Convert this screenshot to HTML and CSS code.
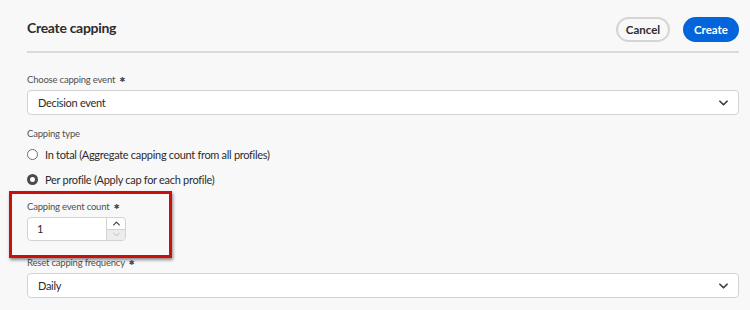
FILE: index.html
```html
<!DOCTYPE html>
<html lang="en">
<head>
    <meta charset="UTF-8">
    <meta name="viewport" content="width=device-width, initial-scale=1.0">
    <title>Create capping</title>
    <link rel="stylesheet" href="styles.css">
</head>
<body>
    <div class="dialog">
        <div class="dialog-header">
            <h1 class="dialog-title">Create capping</h1>
            <div class="header-actions">
                <button class="btn btn-secondary">Cancel</button>
                <button class="btn btn-primary">Create</button>
            </div>
        </div>

        <div class="field field-event">
            <label class="field-label">Choose capping event <span class="required">✱</span></label>
            <div class="select">
                <span class="select-value">Decision event</span>
                <svg class="chevron" viewBox="0 0 10 6" fill="none" stroke="currentColor" stroke-width="1.8" stroke-linecap="round" stroke-linejoin="round">
                    <polyline points="1 1 5 5 9 1"></polyline>
                </svg>
            </div>
        </div>

        <div class="field field-type">
            <label class="field-label">Capping type</label>
            <div class="radio-group">
                <div class="radio-row">
                    <span class="radio"></span>
                    <span class="radio-text">In total (Aggregate capping count from all profiles)</span>
                </div>
                <div class="radio-row">
                    <span class="radio checked"></span>
                    <span class="radio-text">Per profile (Apply cap for each profile)</span>
                </div>
            </div>
        </div>

        <div class="field field-count highlighted">
            <label class="field-label">Capping event count <span class="required">✱</span></label>
            <div class="number-input">
                <span class="number-value">1</span>
                <div class="stepper">
                    <div class="step step-up">
                        <svg viewBox="0 0 10 6" fill="none" stroke="currentColor" stroke-width="1.6" stroke-linecap="round" stroke-linejoin="round">
                            <polyline points="1 5 5 1 9 5"></polyline>
                        </svg>
                    </div>
                    <div class="step step-down">
                        <svg viewBox="0 0 10 6" fill="none" stroke="currentColor" stroke-width="1.2" stroke-linecap="round" stroke-linejoin="round">
                            <polyline points="1 1 5 5 9 1"></polyline>
                        </svg>
                    </div>
                </div>
            </div>
        </div>

        <div class="field field-reset">
            <label class="field-label">Reset capping frequency <span class="required">✱</span></label>
            <div class="select">
                <span class="select-value">Daily</span>
                <svg class="chevron" viewBox="0 0 10 6" fill="none" stroke="currentColor" stroke-width="1.8" stroke-linecap="round" stroke-linejoin="round">
                    <polyline points="1 1 5 5 9 1"></polyline>
                </svg>
            </div>
        </div>
    </div>
</body>
</html>
```

FILE: styles.css
```css
* {
    margin: 0;
    padding: 0;
    box-sizing: border-box;
}

body {
    font-family: Lato, "Noto Sans", sans-serif;
    background-color: #f8f8f8;
    color: #2c2c2c;
}

.dialog {
    padding: 17px 11px 0 27px;
}

.dialog-header {
    display: flex;
    align-items: center;
    justify-content: space-between;
    padding-bottom: 9px;
    border-bottom: 2px solid #dadada;
}

.dialog-title {
    font-size: 14px;
    font-weight: 700;
    line-height: 20px;
    letter-spacing: -0.3px;
    color: #2c2c2c;
    margin-bottom: 4px;
}

.header-actions {
    display: flex;
    gap: 13px;
}

.btn {
    font-family: inherit;
    font-size: 11.5px;
    font-weight: 700;
    height: 25px;
    border-radius: 13px;
    cursor: pointer;
}

.btn-secondary {
    width: 54px;
    background-color: #f8f8f8;
    border: 2px solid #d5d5d5;
    color: #2c2c2c;
}

.btn-primary {
    width: 56px;
    background-color: #0265dc;
    border: none;
    color: white;
}

.field-label {
    display: block;
    font-size: 9.5px;
    line-height: 14px;
    letter-spacing: -0.2px;
    color: #505050;
    white-space: nowrap;
}

.required {
    margin-left: 2px;
    font-family: "DejaVu Sans", sans-serif;
    font-size: 7px;
    color: #4b4b4b;
    vertical-align: 1px;
}

.field-event {
    margin-top: 20px;
}

.field-event .field-label,
.field-reset .field-label {
    margin-bottom: 3px;
}

.select {
    height: 25px;
    background-color: white;
    border: 1px solid #d3d3d3;
    border-radius: 4px;
    display: flex;
    align-items: center;
    justify-content: space-between;
    padding: 0 10px 0 10px;
}

.select-value {
    font-size: 11px;
    letter-spacing: -0.3px;
    color: #2c2c2c;
}

.chevron {
    width: 9px;
    height: 6px;
    color: #3a3a3a;
}

.field-type {
    margin-top: 12px;
}

.radio-group {
    display: flex;
    flex-direction: column;
    gap: 5px;
    margin-top: 3px;
}

.radio-row {
    display: flex;
    align-items: center;
    height: 20px;
}

.radio {
    width: 11px;
    height: 11px;
    border-radius: 50%;
    border: 1.5px solid #6e6e6e;
    margin-right: 7px;
    background-color: white;
}

.radio.checked {
    border: 3.5px solid #4b4b4b;
}

.radio-text {
    font-size: 11px;
    letter-spacing: -0.3px;
    color: #2c2c2c;
}

.field-count {
    margin-top: 11px;
    position: relative;
    width: 99px;
}

.field-count .field-label {
    margin-bottom: 3px;
}

.highlighted::before {
    content: "";
    position: absolute;
    top: -9px;
    left: -18px;
    width: 157px;
    height: 61px;
    border: 3.5px solid #c8100d;
    box-shadow: 1px 2px 3px rgb(0 0 0 / 0.45);
}

.number-input {
    display: flex;
    height: 24px;
    background-color: white;
    border: 1px solid #d3d3d3;
    border-radius: 4px;
    overflow: hidden;
}

.number-value {
    flex: 1;
    font-size: 11px;
    line-height: 22px;
    padding-left: 9px;
}

.stepper {
    width: 19px;
    display: flex;
    flex-direction: column;
    border-left: 1px solid #d3d3d3;
}

.step {
    flex: 1;
    display: flex;
    align-items: center;
    justify-content: center;
}

.step svg {
    width: 7px;
    height: 5px;
}

.step-up {
    color: #3a3a3a;
}

.step-down {
    background-color: #ececec;
    border-top: 1px solid #d3d3d3;
    color: #b4b4b4;
}

.field-reset {
    margin-top: 15px;
}
```
